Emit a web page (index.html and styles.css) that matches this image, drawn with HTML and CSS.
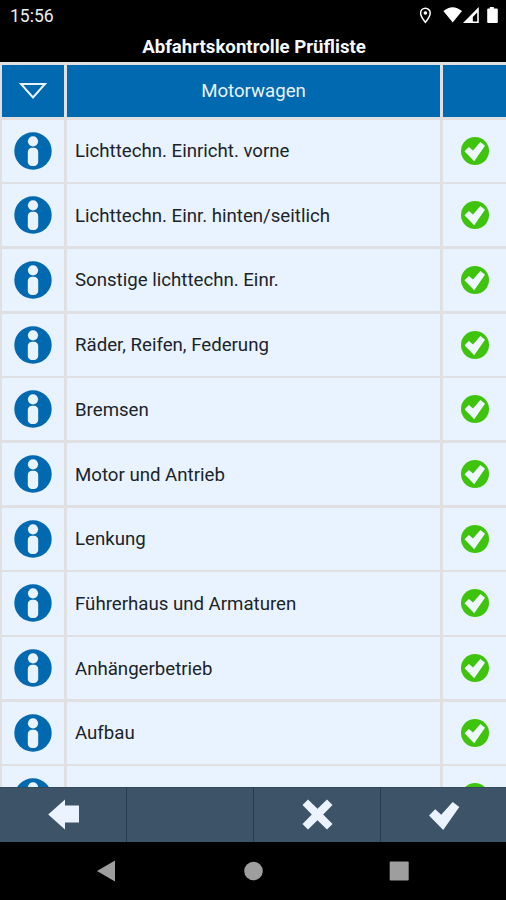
FILE: index.html
```html
<!DOCTYPE html>
<html lang="de">
<head>
<meta charset="utf-8">
<title>Abfahrtskontrolle Prüfliste</title>
<link rel="stylesheet" href="styles.css">
</head>
<body>
<svg class="defs" aria-hidden="true">
  <symbol id="info" viewBox="0 0 38 38"><circle cx="19" cy="19" r="18.7" fill="#0069b0"/><circle cx="19" cy="9.3" r="5.1" fill="#e9f3ff"/><rect x="13.8" y="15.800" width="10.4" height="18.3" rx="4.2" fill="#e9f3ff"/></symbol>
  <symbol id="ok" viewBox="0 0 28 28"><circle cx="14" cy="14" r="14" fill="#3fc40d"/><path d="M3.5 14.2 7.9 9.900 12 13.400 19.4 5 24 8.8 13.2 24.2Z" fill="#f0f8ff"/></symbol>
</svg>
<header class="status">
  <time class="clock">15:56</time>
  <svg class="status-icons" viewBox="0 0 84 20" fill="#fff">
    <path d="M8.4 3.2a4.8 4.8 0 0 0-4.8 4.8c0 3.5 4.8 9.3 4.8 9.3s4.8-5.8 4.8-9.3a4.8 4.8 0 0 0-4.8-4.8Z" fill="none" stroke="#fff" stroke-width="1.5"/><circle cx="8.4" cy="8" r="1.8"/>
    <path d="M26.4 6Q35.6-1.6 45 6L35.7 17.4Z"/>
    <path fill-rule="evenodd" d="M61.8 2V18H46Zm-1.6 5.500-4.400 4.500V16.5h4.400Z"/>
    <path d="M72.8 2h4v1.600h3q1 0 1 1V17q0 1-1 1h-8.600q-1 0-1-1V4.600q0-1 1-1h1.600Z"/>
  </svg>
</header>
<h1 class="title">Abfahrtskontrolle Prüfliste</h1>
<main class="list">
  <div class="row head"><div class="cell"><svg class="tri" viewBox="0 0 28 18"><path d="M2 2H26L14 15.500Z" fill="none" stroke="#e9f3ff" stroke-width="2"/></svg></div><div class="cell">Motorwagen</div><div class="cell"></div></div>
  <div class="row"><div class="cell"><svg class="info"><use href="#info"/></svg></div><div class="cell label">Lichttechn. Einricht. vorne</div><div class="cell"><svg class="ok"><use href="#ok"/></svg></div></div>
  <div class="row"><div class="cell"><svg class="info"><use href="#info"/></svg></div><div class="cell label">Lichttechn. Einr. hinten/seitlich</div><div class="cell"><svg class="ok"><use href="#ok"/></svg></div></div>
  <div class="row"><div class="cell"><svg class="info"><use href="#info"/></svg></div><div class="cell label">Sonstige lichttechn. Einr.</div><div class="cell"><svg class="ok"><use href="#ok"/></svg></div></div>
  <div class="row"><div class="cell"><svg class="info"><use href="#info"/></svg></div><div class="cell label">Räder, Reifen, Federung</div><div class="cell"><svg class="ok"><use href="#ok"/></svg></div></div>
  <div class="row"><div class="cell"><svg class="info"><use href="#info"/></svg></div><div class="cell label">Bremsen</div><div class="cell"><svg class="ok"><use href="#ok"/></svg></div></div>
  <div class="row"><div class="cell"><svg class="info"><use href="#info"/></svg></div><div class="cell label">Motor und Antrieb</div><div class="cell"><svg class="ok"><use href="#ok"/></svg></div></div>
  <div class="row"><div class="cell"><svg class="info"><use href="#info"/></svg></div><div class="cell label">Lenkung</div><div class="cell"><svg class="ok"><use href="#ok"/></svg></div></div>
  <div class="row"><div class="cell"><svg class="info"><use href="#info"/></svg></div><div class="cell label">Führerhaus und Armaturen</div><div class="cell"><svg class="ok"><use href="#ok"/></svg></div></div>
  <div class="row"><div class="cell"><svg class="info"><use href="#info"/></svg></div><div class="cell label">Anhängerbetrieb</div><div class="cell"><svg class="ok"><use href="#ok"/></svg></div></div>
  <div class="row"><div class="cell"><svg class="info"><use href="#info"/></svg></div><div class="cell label">Aufbau</div><div class="cell"><svg class="ok"><use href="#ok"/></svg></div></div>
  <div class="row"><div class="cell"><svg class="info"><use href="#info"/></svg></div><div class="cell label"></div><div class="cell"><svg class="ok"><use href="#ok"/></svg></div></div>
</main>
<nav class="actions">
  <div class="action"><svg class="glyph" viewBox="0 0 32 32"><path d="M1.200 15.500 18 .5V6.500H32V23.500H18V30.500Z"/></svg></div>
  <div class="action"></div>
  <div class="action"><svg class="glyph" viewBox="0 0 32 32"><path d="M7 .5 16.500 9.800 26 .5 31.500 6 22.200 15.500 31.500 25 26 30.500 16.500 21.200 7 30.500 1.500 25 10.800 15.500 1.500 6Z"/></svg></div>
  <div class="action"><svg class="glyph" viewBox="0 0 32 32"><path d="M1 16.500 7.200 10.300 13.200 15.800 24.700 3 31.300 8 15.200 31Z"/></svg></div>
</nav>
<footer class="system">
  <svg class="nav-icons" viewBox="0 0 506 58" fill="#9e9e9e"><path d="M97 29 115 18.500V39.500Z"/><circle cx="253.500" cy="29" r="9.300"/><rect x="389.700" y="19.500" width="19" height="19" rx="1"/></svg>
</footer>
</body>
</html>
```
FILE: styles.css
```css
body {
  margin: 0;
  width: 506px;
  height: 900px;
  overflow: hidden;
  display: flex;
  flex-direction: column;
  background: #000;
  font-family: Roboto, sans-serif;
}
.defs { display: none; }
.status {
  height: 32px;
  display: flex;
  justify-content: space-between;
  padding: 0 9px 0 10px;
  box-sizing: border-box;
  color: #eee;
}
.clock { font-size: 17.5px; line-height: 32px; }
.status-icons { width: 84px; height: 20px; margin-top: 5px; margin-right: -4px; }
.title {
  margin: 0;
  height: 30px;
  padding-left: 2px;
  color: #f5f8ff;
  font-size: 18.65px;
  font-weight: 700;
  line-height: 31px;
  text-align: center;
}
.list {
  height: 725px;
  box-sizing: border-box;
  padding: 3px 0 0 2px;
  overflow: hidden;
  display: flex;
  flex-direction: column;
  gap: 2.5px;
  background: #e0e0e3;
}
.row {
  flex: none;
  height: 62.2px;
  display: grid;
  grid-template-columns: 62px 373px 63px;
  gap: 3px;
  color: #1b232b;
  font-size: 18.65px;
}
.cell {
  display: flex;
  align-items: center;
  justify-content: center;
  background: #e9f3ff;
}
.head { height: 52px; color: #e9f3ff; }
.head .cell { background: #0069b0; }
.cell.label { justify-content: flex-start; padding: 1px 0 0 8px; }
.tri { width: 28px; height: 18px; }
.info { width: 38px; height: 38px; }
.ok { width: 28px; height: 28px; }
.actions {
  height: 55px;
  display: grid;
  grid-template-columns: 127px 127px 127px 125px;
  background: #3d5468;
}
.action {
  display: flex;
  align-items: center;
  justify-content: center;
  border-right: 1px solid #263d50;
  border-top: 1px solid #34495b;
}
.action:last-child { border-right: 0; }
.glyph { width: 32px; height: 32px; fill: #eaf3ff; }
.system { height: 58px; }
.nav-icons { display: block; width: 506px; height: 58px; }
```
